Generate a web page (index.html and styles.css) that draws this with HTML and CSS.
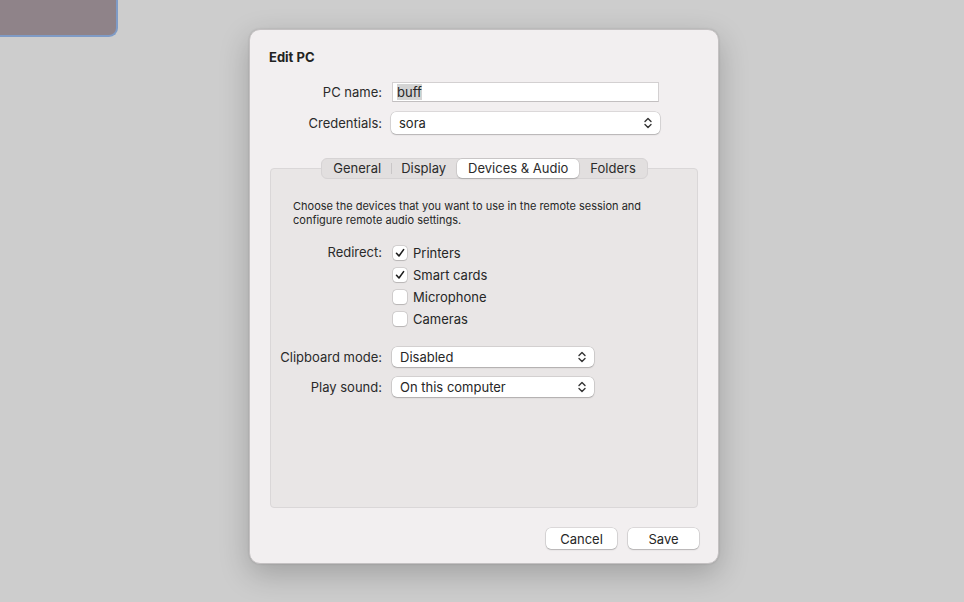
FILE: index.html
```html
<!DOCTYPE html>
<html lang="en">
<head>
    <meta charset="UTF-8">
    <meta name="viewport" content="width=device-width, initial-scale=1.0">
    <title>Edit PC</title>
    <link rel="stylesheet" href="styles.css">
</head>
<body>
    <div class="desk-tile"></div>

    <div class="dialog">
        <h1 class="title">Edit PC</h1>

        <div class="form-grid top-form">
            <label class="field-label">PC name:</label>
            <div class="text-input"><span class="selected-text">buff</span></div>

            <label class="field-label">Credentials:</label>
            <div class="popup wide">
                <span>sora</span>
                <svg class="chevrons" width="8" height="12" viewBox="0 0 8 12"><path d="M1 4.5 L4 1.5 L7 4.5 M1 7.5 L4 10.5 L7 7.5" fill="none" stroke="#333" stroke-width="1.4" stroke-linecap="round" stroke-linejoin="round"/></svg>
            </div>
        </div>

        <div class="tabs-area">
            <div class="tab-bar">
                <div class="tab">General</div>
                <div class="tab sep">Display</div>
                <div class="tab active">Devices &amp; Audio</div>
                <div class="tab">Folders</div>
            </div>

            <div class="tab-box">
                <p class="hint">Choose the devices that you want to use in the remote session and configure remote audio settings.</p>

                <div class="form-grid inner-form">
                    <label class="field-label redirect-label">Redirect:</label>
                    <div class="check-list">
                        <div class="check-row"><span class="checkbox checked"><svg width="10" height="10" viewBox="0 0 10 10"><path d="M1.5 5.3 L4 8 L8.6 1.6" fill="none" stroke="#1d1d1d" stroke-width="1.6" stroke-linecap="round" stroke-linejoin="round"/></svg></span>Printers</div>
                        <div class="check-row"><span class="checkbox checked"><svg width="10" height="10" viewBox="0 0 10 10"><path d="M1.5 5.3 L4 8 L8.6 1.6" fill="none" stroke="#1d1d1d" stroke-width="1.6" stroke-linecap="round" stroke-linejoin="round"/></svg></span>Smart cards</div>
                        <div class="check-row"><span class="checkbox"></span>Microphone</div>
                        <div class="check-row"><span class="checkbox"></span>Cameras</div>
                    </div>

                    <label class="field-label">Clipboard mode:</label>
                    <div class="popup narrow">
                        <span>Disabled</span>
                        <svg class="chevrons" width="8" height="12" viewBox="0 0 8 12"><path d="M1 4.5 L4 1.5 L7 4.5 M1 7.5 L4 10.5 L7 7.5" fill="none" stroke="#333" stroke-width="1.4" stroke-linecap="round" stroke-linejoin="round"/></svg>
                    </div>

                    <label class="field-label">Play sound:</label>
                    <div class="popup narrow">
                        <span>On this computer</span>
                        <svg class="chevrons" width="8" height="12" viewBox="0 0 8 12"><path d="M1 4.5 L4 1.5 L7 4.5 M1 7.5 L4 10.5 L7 7.5" fill="none" stroke="#333" stroke-width="1.4" stroke-linecap="round" stroke-linejoin="round"/></svg>
                    </div>
                </div>
            </div>
        </div>

        <div class="button-row">
            <button class="push">Cancel</button>
            <button class="push">Save</button>
        </div>
    </div>
</body>
</html>
```

FILE: styles.css
```css
body {
    margin: 0;
    height: 602px;
    background-color: #cdcdcd;
    font-family: Inter, "Liberation Sans", sans-serif;
    font-size: 13px;
    color: #262626;
    position: relative;
    overflow: hidden;
}

.desk-tile {
    position: absolute;
    top: -10px;
    left: -10px;
    width: 126px;
    height: 45px;
    background-color: #8f8389;
    border-right: 2px solid #7f9bc6;
    border-bottom: 2px solid #7f9bc6;
    border-bottom-right-radius: 9px;
}

.dialog {
    position: absolute;
    top: 29px;
    left: 249px;
    width: 428px;
    height: 500px;
    padding: 19px 20px 14px 20px;
    background-color: #f2eff0;
    border: 1px solid #c4c1c2;
    border-radius: 11px;
    box-shadow: 0 10px 30px rgba(0, 0, 0, 0.22), 0 0 2px rgba(0, 0, 0, 0.15);
    display: flex;
    flex-direction: column;
}

.title {
    margin: 0;
    margin-left: -1px;
    font-size: 13px;
    font-weight: 700;
    line-height: 16px;
    color: #222;
}

.form-grid {
    display: grid;
    column-gap: 10px;
    align-items: center;
}

.top-form {
    grid-template-columns: 112px 267px;
    row-gap: 10px;
    margin-top: 17px;
}

.field-label {
    text-align: right;
    color: #2a2a2a;
}

.text-input {
    height: 20px;
    box-sizing: border-box;
    background: #fff;
    border: 1px solid #d3d0d1;
    border-bottom-color: #c2bfc0;
    padding: 1px 4px;
    line-height: 16px;
    font-size: 13px;
}

.selected-text {
    background-color: #d4d4d4;
}

.popup {
    height: 22px;
    box-sizing: border-box;
    background: #fff;
    border-radius: 5px;
    box-shadow: 0 0 0 0.5px rgba(0, 0, 0, 0.18), 0 1px 1.5px rgba(0, 0, 0, 0.18);
    display: flex;
    align-items: center;
    justify-content: space-between;
    padding: 0 8px 0 8px;
}

.popup.wide {
    width: 269px;
    margin-left: -1px;
}

.popup.narrow {
    width: 202px;
    height: 20px;
}

.chevrons {
    display: block;
}

.tabs-area {
    margin-top: 24px;
    display: flex;
    flex-direction: column;
    align-items: center;
}

.tab-bar {
    position: relative;
    z-index: 1;
    display: flex;
    align-items: center;
    height: 21px;
    box-sizing: border-box;
    padding: 0 1px;
    background-color: #e2dfdf;
    border: 1px solid #d6d3d4;
    border-radius: 6px;
    margin-left: 1px;
}

.tab {
    height: 19px;
    line-height: 19px;
    padding: 0 10px;
    color: #2b2b2b;
    position: relative;
}

.tab.sep::before {
    content: "";
    position: absolute;
    left: 0;
    top: 4px;
    height: 11px;
    border-left: 1px solid #c9c6c7;
}

.tab.active {
    background: #fff;
    border-radius: 5px;
    box-shadow: 0 0 0 0.5px rgba(0, 0, 0, 0.12), 0 1px 1.5px rgba(0, 0, 0, 0.15);
    padding: 0 11px;
    margin: 0 1px;
}

.tab-box {
    align-self: stretch;
    margin-top: -11px;
    height: 340px;
    box-sizing: border-box;
    background-color: #e9e6e6;
    border: 1px solid #dad7d8;
    border-radius: 4px;
    padding: 30px 12px 0 2px;
}

.hint {
    margin: 0 0 0 20px;
    font-size: 11px;
    line-height: 14px;
    color: #262626;
    width: 380px;
}

.inner-form {
    grid-template-columns: 109px 210px;
    row-gap: 10px;
    margin-top: 19px;
}

.redirect-label {
    align-self: start;
    margin-top: -2px;
}

.check-list {
    display: flex;
    flex-direction: column;
    gap: 8px;
    margin-bottom: 11px;
}

.check-row {
    display: flex;
    align-items: center;
    height: 14px;
    color: #262626;
}

.checkbox {
    width: 14px;
    height: 14px;
    box-sizing: border-box;
    margin-right: 6px;
    margin-left: 1px;
    background: #fff;
    border-radius: 3.5px;
    box-shadow: 0 0 0 0.5px rgba(0, 0, 0, 0.2), 0 1px 1px rgba(0, 0, 0, 0.12);
    display: flex;
    align-items: center;
    justify-content: center;
}

.button-row {
    margin-top: auto;
    margin-right: -1px;
    display: flex;
    justify-content: flex-end;
    gap: 11px;
}

.push {
    width: 71px;
    height: 21px;
    background: #fff;
    border: none;
    border-radius: 5px;
    box-shadow: 0 0 0 0.5px rgba(0, 0, 0, 0.18), 0 1px 1.5px rgba(0, 0, 0, 0.18);
    font-family: inherit;
    font-size: 13px;
    color: #262626;
    padding: 0;
}
```
